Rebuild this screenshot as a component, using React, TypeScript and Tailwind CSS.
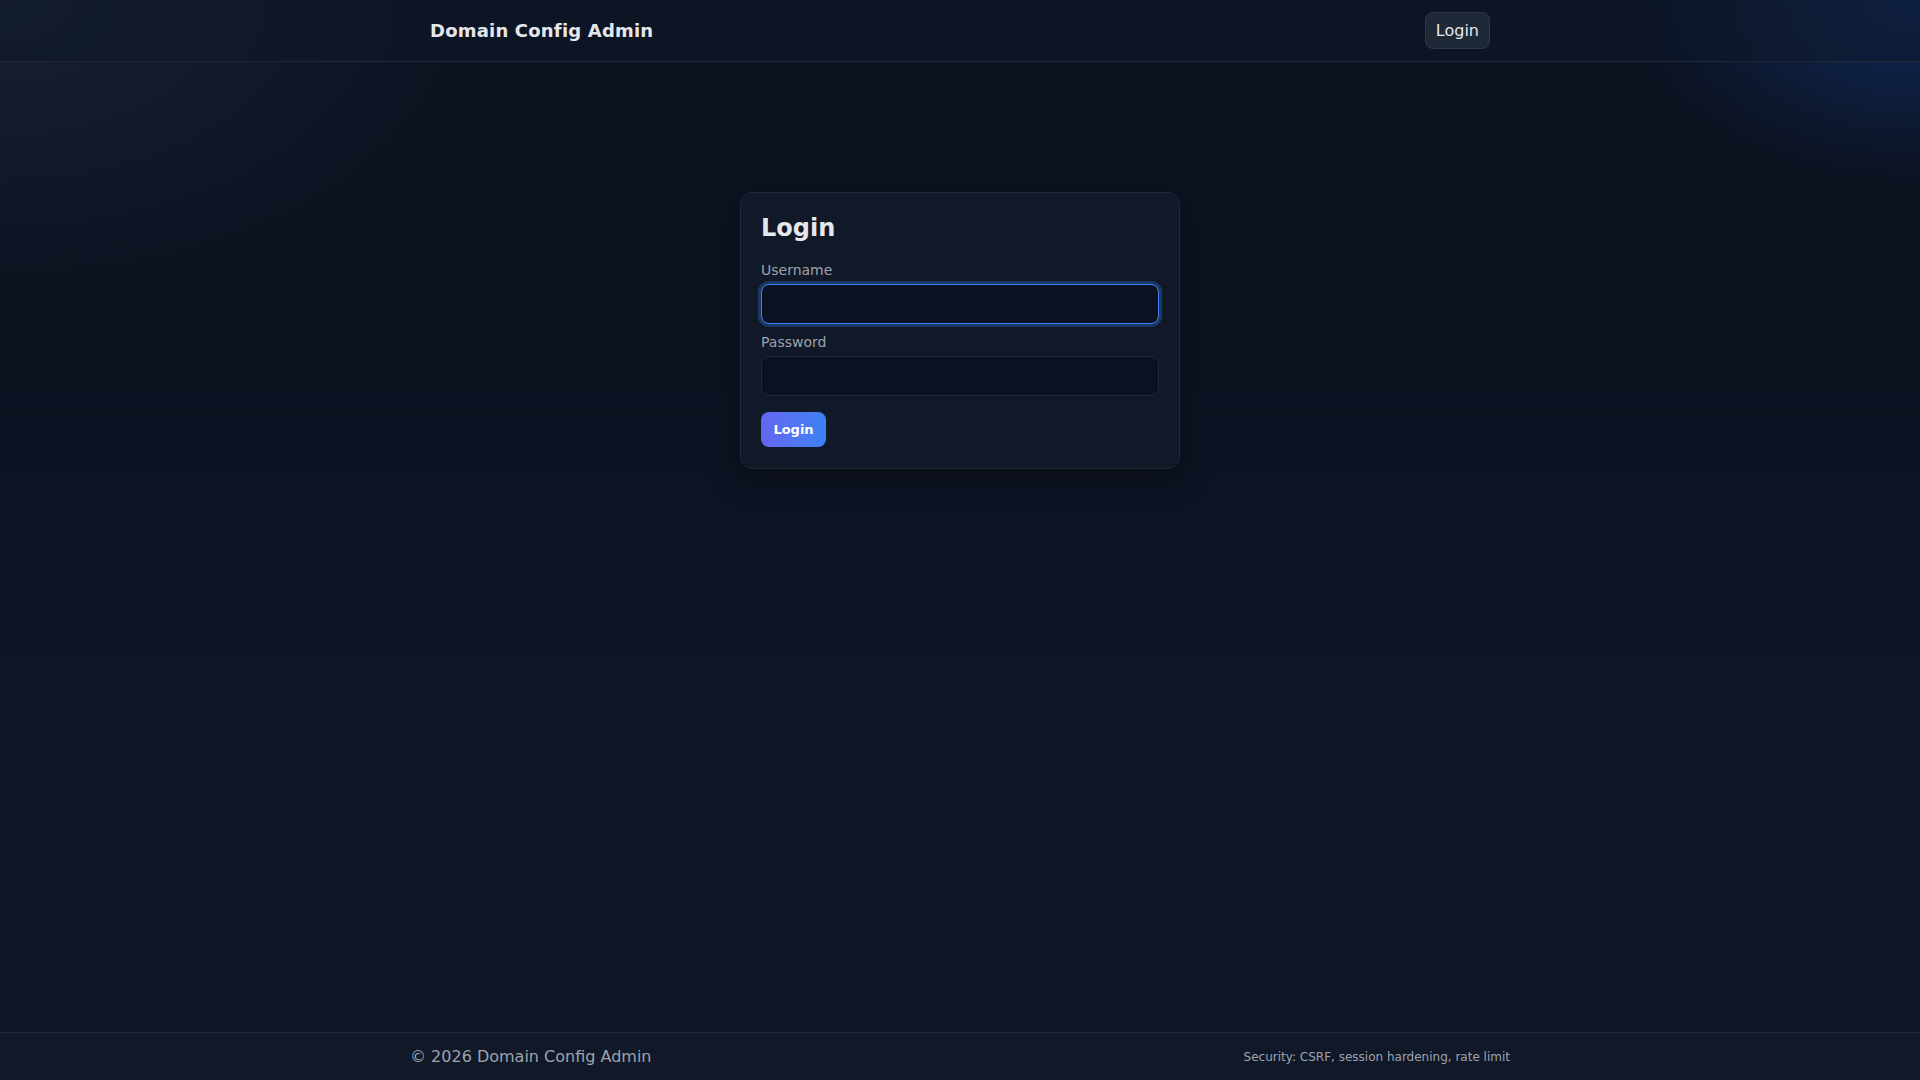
export default function App() {
  return (
    <div className="min-h-screen flex flex-col bg-[#0c1220] text-[#e5e7eb] font-['DejaVu_Sans',sans-serif] relative overflow-hidden">
      <div className="pointer-events-none absolute inset-0 bg-[radial-gradient(ellipse_700px_420px_at_0%_0%,rgba(40,50,70,0.45),transparent_70%)]" />
      <div className="pointer-events-none absolute inset-0 bg-[radial-gradient(ellipse_420px_260px_at_100%_0%,rgba(20,70,160,0.45),transparent_70%)]" />
      <div className="pointer-events-none absolute inset-0 bg-[linear-gradient(to_bottom,transparent_0%,transparent_35%,rgba(15,23,42,0.9)_70%)]" />

      <header className="relative h-[62px] border-b border-[#1f2937] bg-[rgba(15,23,42,0.55)]">
        <div className="mx-auto max-w-[1100px] px-5 h-full flex items-center justify-between">
          <div className="text-[18px] font-bold tracking-[0.2px] text-[#e5e7eb]">Domain Config Admin</div>
          <button className="h-[37px] px-[10px] rounded-lg border border-[#2d3748] bg-[#1e2836] text-[16px] text-[#e5e7eb]">
            Login
          </button>
        </div>
      </header>

      <main className="relative flex-1">
        <div className="mx-auto mt-[130px] w-[440px] rounded-xl border border-[#1f2937] bg-[#111827] px-5 pt-[18px] pb-[21px] shadow-[0_10px_30px_rgba(0,0,0,0.35)]">
          <h1 className="text-[24px] font-bold leading-[34px] text-[#e5e7eb]">Login</h1>
          <form className="mt-[16px]" onSubmit={(e) => e.preventDefault()}>
            <label className="block text-[14px] leading-[18px] text-[#9ca3af]">Username</label>
            <input
              autoFocus
              type="text"
              className="mt-[5px] block w-full h-[40px] rounded-lg border border-[#3b82f6] bg-[#0b1120] px-3 text-[14px] text-[#e5e7eb] outline-none ring-[3px] ring-[rgba(59,130,246,0.3)]"
            />
            <label className="mt-[9px] block text-[14px] leading-[18px] text-[#9ca3af]">Password</label>
            <input
              type="password"
              className="mt-[5px] block w-full h-[40px] rounded-lg border border-[#1f2937] bg-[#0b1120] px-3 text-[14px] text-[#e5e7eb] outline-none"
            />
            <button
              type="submit"
              className="mt-[16px] h-[35px] w-[65px] rounded-lg bg-gradient-to-r from-[#6366f1] to-[#3b82f6] text-[13px] font-bold text-white"
            >
              Login
            </button>
          </form>
        </div>
      </main>

      <footer className="relative h-[48px] border-t border-[#1e293b] bg-[#111827]">
        <div className="mx-auto max-w-[1100px] h-full flex items-center justify-between">
          <div className="text-[16px] text-[#9ca3af]">© 2026 Domain Config Admin</div>
          <div className="text-[12px] text-[#9ca3af]">Security: CSRF, session hardening, rate limit</div>
        </div>
      </footer>
    </div>
  )
}
